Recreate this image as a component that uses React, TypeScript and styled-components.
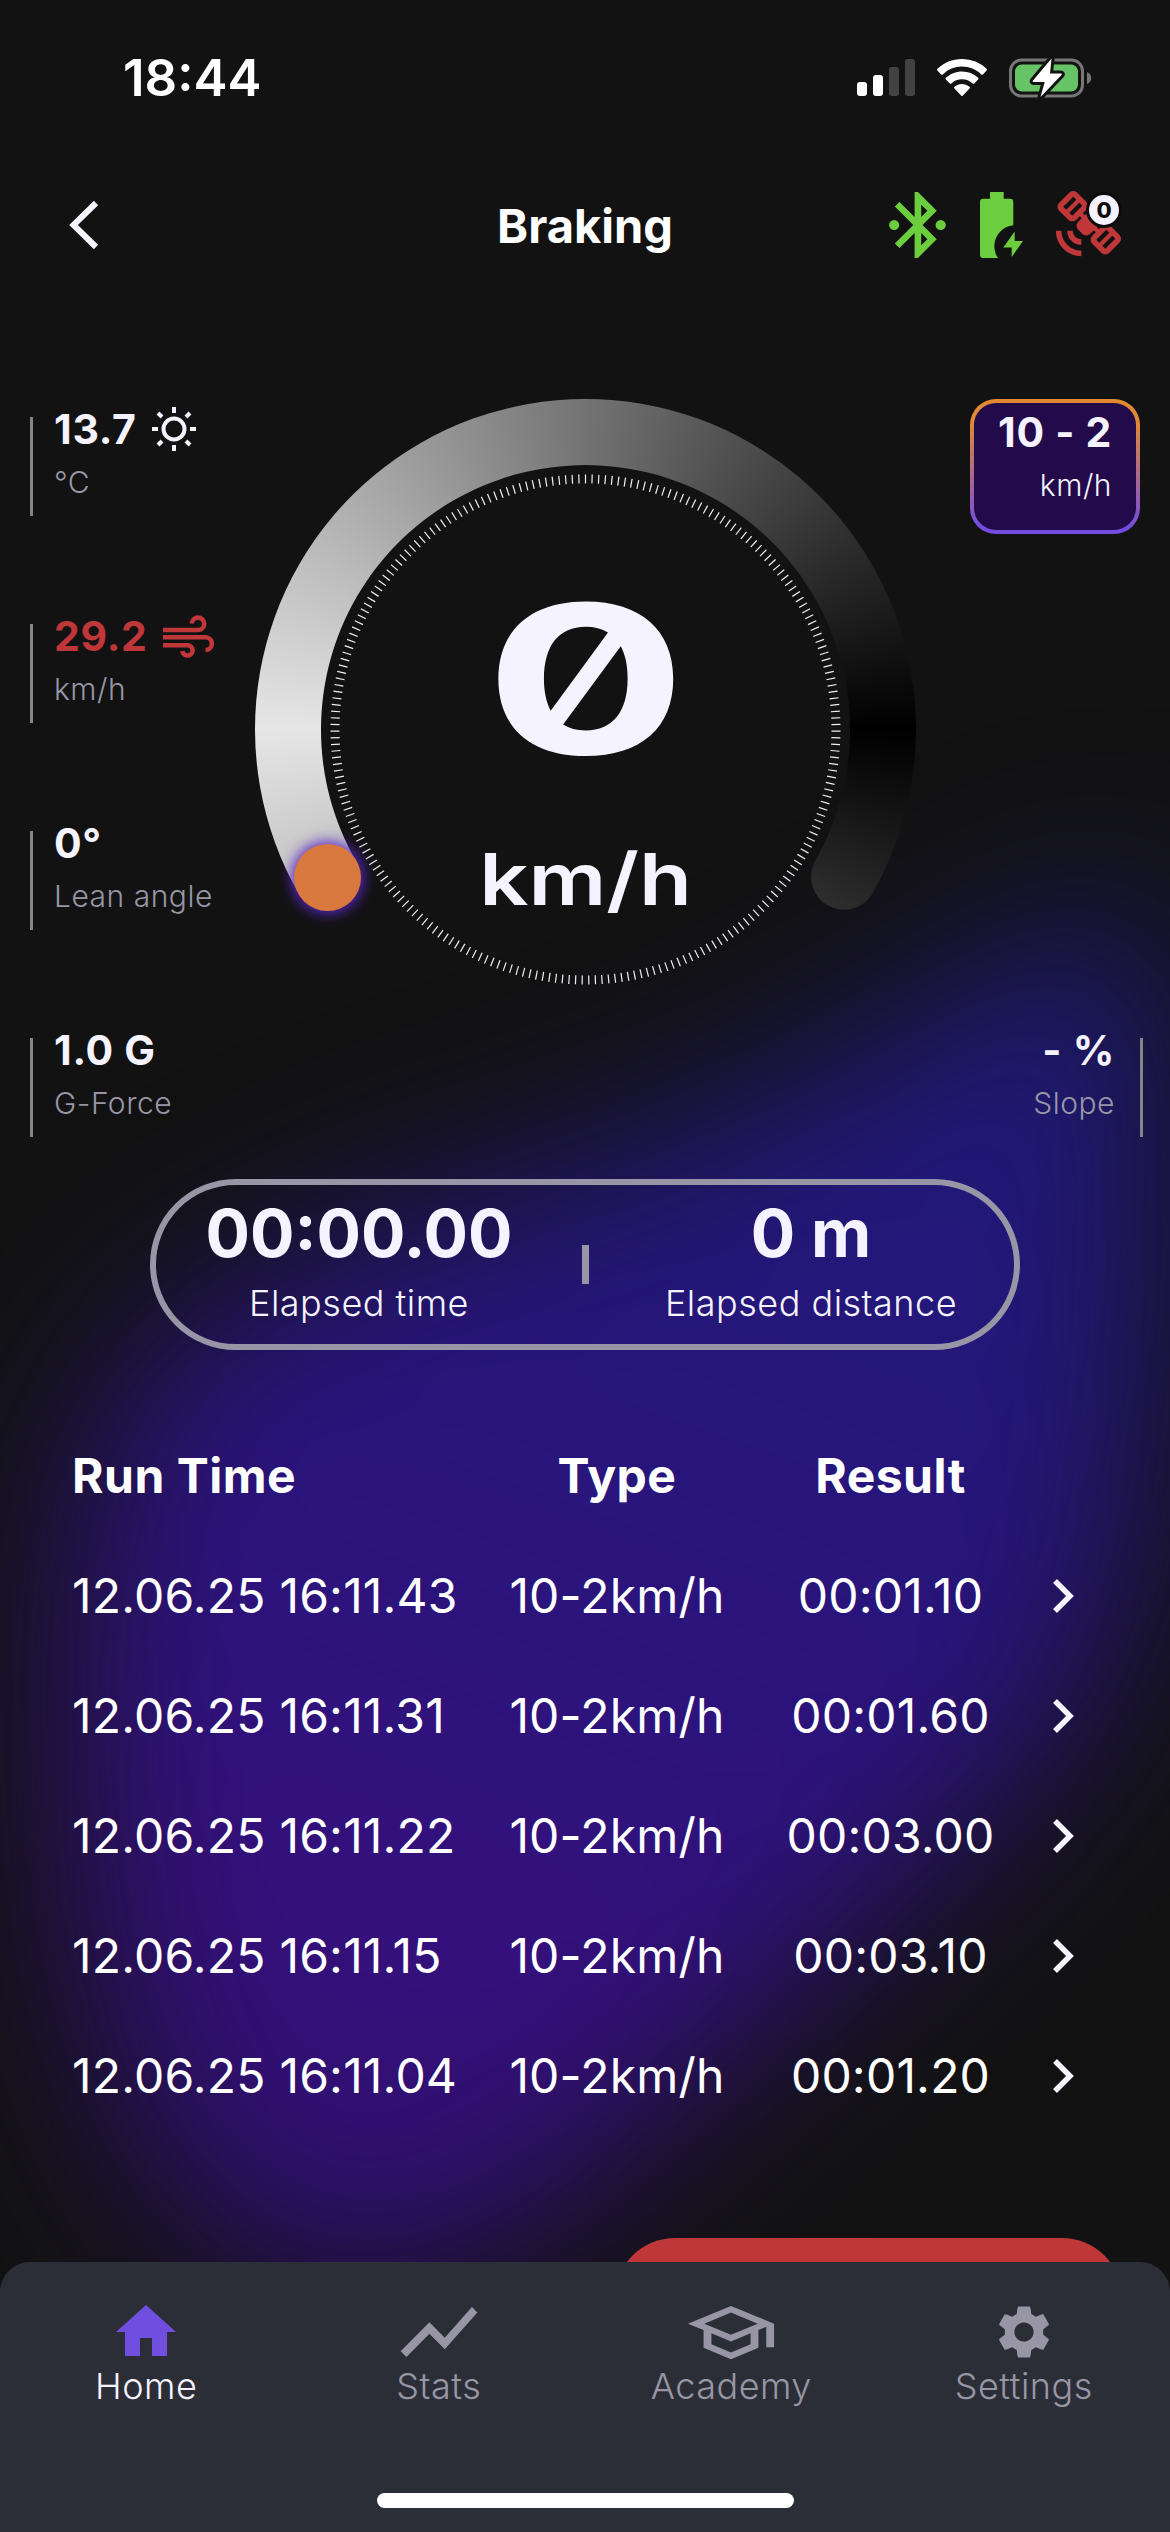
import React from "react";
import styled, { createGlobalStyle } from "styled-components";
import {
  MdHome,
  MdOutlineSchool,
  MdSatelliteAlt,
  MdSettings,
  MdShowChart,
} from "react-icons/md";

const color = {
  base: "#121212",
  text: "#f5f3ff",
  muted: "#9896a6",
  rule: "#858585",
  red: "#bf3739",
  green: "#6cce3e",
  violet: "#704fe0",
  nav: "#2c2e37",
};

const GlobalStyle = createGlobalStyle`
  * { box-sizing: border-box; }
  body {
    margin: 0;
    background: ${color.base};
    font-family: Inter, "Liberation Sans", sans-serif;
    color: ${color.text};
  }
`;

const Screen = styled.div`
  position: relative;
  isolation: isolate;
  display: flex;
  flex-direction: column;
  width: 1170px;
  height: 2532px;
  overflow: hidden;
  background: ${color.base};
`;

const Glow = styled.svg`
  position: absolute;
  inset: 0;
  z-index: -1;
`;

/* ---------- status bar ---------- */

const StatusBar = styled.div`
  display: flex;
  justify-content: space-between;
  align-items: center;
  height: 156px;
  flex: none;
  padding: 0 78px 0 123px;
  color: #fff;
`;

const Clock = styled.span`
  font-size: 51px;
  font-weight: 600;
  line-height: 60px;
`;

const StatusIcons = styled.div`
  display: flex;
  align-items: center;
  gap: 22px;
`;

/* ---------- header ---------- */

const Header = styled.header`
  display: grid;
  grid-template-columns: minmax(0, 1fr) auto minmax(0, 1fr);
  align-items: center;
  height: 138px;
  flex: none;
  padding: 0 49px 0 66px;
`;

const Title = styled.h1`
  margin: 0;
  padding: 1px 17px 0 0;
  font-size: 47px;
  font-weight: 700;
  line-height: 60px;
  color: #fff;
`;

const HeaderIcons = styled.div`
  display: flex;
  justify-content: flex-end;
  align-items: center;
  gap: 34px;
`;

const Satellite = styled.div`
  position: relative;
  display: flex;
  margin-left: -4px;
  color: ${color.red};
  & > svg {
    transform: scaleX(-1);
  }
`;

const SatelliteCount = styled.span`
  position: absolute;
  top: 1px;
  right: -1px;
  width: 36px;
  height: 36px;
  border: 3px solid #0c0c0c;
  border-radius: 50%;
  background: ${color.text};
  color: #0c0c0c;
  font-size: 22px;
  font-weight: 800;
  line-height: 30px;
  text-align: center;
`;

/* ---------- dashboard ---------- */

const Dashboard = styled.section`
  display: grid;
  grid-template-columns: 255px 661px 254px;
  grid-template-rows: 738px;
  height: 738px;
  flex: none;
  margin-top: 105px;
`;

const SideColumn = styled.div<{ $end?: boolean }>`
  display: flex;
  flex-direction: column;
  justify-content: ${(p) => (p.$end ? "space-between" : "flex-start")};
  align-items: ${(p) => (p.$end ? "flex-end" : "flex-start")};
  padding: ${(p) => (p.$end ? "0 27px 0 0" : "5px 0 0 30px")};
`;

const MetricBox = styled.div<{ $end?: boolean }>`
  display: flex;
  flex-direction: ${(p) => (p.$end ? "row-reverse" : "row")};
  align-items: flex-start;
  gap: ${(p) => (p.$end ? "25px" : "21px")};
  height: ${(p) => (p.$end ? "112px" : "207px")};
  flex: none;
  text-align: ${(p) => (p.$end ? "right" : "left")};
`;

const MetricRule = styled.div`
  width: 3px;
  height: 99px;
  margin-top: 13px;
  background: ${color.rule};
`;

const MetricValue = styled.div<{ $alert?: boolean; $end?: boolean }>`
  display: flex;
  align-items: center;
  justify-content: ${(p) => (p.$end ? "flex-end" : "flex-start")};
  gap: 15px;
  height: 50px;
  font-size: 41px;
  font-weight: 700;
  line-height: 50px;
  letter-spacing: 0.7px;
  white-space: pre;
  color: ${(p) => (p.$alert ? color.red : color.text)};
`;

const MetricLabel = styled.div<{ $bright?: boolean }>`
  font-size: 30px;
  font-weight: 350;
  line-height: 56px;
  letter-spacing: 0.5px;
  white-space: nowrap;
  color: ${(p) => (p.$bright ? color.text : color.muted)};
`;

const RangeCard = styled.button`
  display: flex;
  flex-direction: column;
  align-items: flex-end;
  width: 170px;
  height: 135px;
  margin-right: 3px;
  padding: 4px 24px 0 0;
  border: 4px solid transparent;
  border-radius: 26px;
  background:
    linear-gradient(#230b4b, #230b4b) padding-box,
    linear-gradient(#e28a31, #e28a31 15%, #764ce0 95%) border-box;
  font-family: inherit;
`;

const Gauge = styled.div`
  display: grid;
  width: 661px;
  height: 661px;
  & > * {
    grid-area: 1 / 1;
  }
`;

/* Sweep from 150deg to 30deg: centre 330.5, outer radius 330.5, inner radius 264.5. */
const GaugeTrack = styled.div`
  background: conic-gradient(from 90deg, #000, #e6e6e6 50%, #000);
  clip-path: path(
    "M44.3 495.7 A330.5 330.5 0 1 1 616.7 495.7 A33 33 0 0 1 559.6 462.8 A264.5 264.5 0 1 0 101.4 462.8 Z"
  );
`;

const GaugeMarks = styled.svg`
  z-index: 1;
  overflow: visible;
`;

const Readout = styled.div`
  z-index: 1;
  display: flex;
  flex-direction: column;
  align-items: center;
  padding-top: 170px;
`;

const Speed = styled.div`
  height: 220px;
  font-size: 207px;
  font-weight: 700;
  line-height: 220px;
  font-feature-settings: "zero";
  transform: scaleX(1.45);
`;

const SpeedUnit = styled.div`
  margin-top: 50px;
  font-size: 72px;
  font-weight: 600;
  line-height: 80px;
  transform: scaleX(1.2);
`;

/* ---------- elapsed pill ---------- */

const Elapsed = styled.section`
  display: grid;
  grid-template-columns: 406px 7px 406px;
  justify-content: space-between;
  align-items: center;
  width: 870px;
  height: 171px;
  flex: none;
  margin: 42px auto 0;
  border: 6px solid ${color.muted};
  border-radius: 86px;
  text-align: center;
`;

const ElapsedValue = styled.div`
  padding-top: 3px;
  font-size: 66px;
  font-weight: 700;
  line-height: 74px;
`;

const ElapsedLabel = styled.div`
  font-size: 36px;
  font-weight: 350;
  line-height: 67px;
  letter-spacing: 0.5px;
  white-space: nowrap;
`;

const ElapsedDivider = styled.div`
  height: 39px;
  background: ${color.muted};
`;

/* ---------- run table ---------- */

const Runs = styled.section`
  display: flex;
  flex-direction: column;
  flex: none;
  margin-top: 66px;
  padding: 0 72px;
`;

const RunRow = styled.div<{ $head?: boolean }>`
  display: grid;
  grid-template-columns: 410px 270px 277px 1fr;
  align-items: center;
  height: 120px;
  font-size: 48px;
  font-weight: ${(p) => (p.$head ? 700 : 400)};
  letter-spacing: ${(p) => (p.$head ? "0.5px" : "0.2px")};
  line-height: 60px;
  white-space: nowrap;
  color: #fff;
  & > span + span {
    text-align: center;
  }
  & > svg {
    margin-left: 23px;
  }
`;

const StopButton = styled.button`
  width: 507px;
  height: 120px;
  flex: none;
  margin: 102px 48px 0 auto;
  border: 0;
  border-radius: 60px;
  background: ${color.red};
`;

/* ---------- bottom navigation ---------- */

const BottomBar = styled.footer`
  position: absolute;
  left: 0;
  right: 0;
  bottom: 0;
  display: flex;
  flex-direction: column;
  align-items: center;
  justify-content: space-between;
  height: 270px;
  padding-bottom: 24px;
  border-radius: 30px 30px 0 0;
  background: ${color.nav};
`;

const Tabs = styled.nav`
  display: grid;
  grid-template-columns: repeat(4, 1fr);
  width: 100%;
  padding-top: 34px;
`;

const Tab = styled.div<{ $active?: boolean }>`
  display: flex;
  flex-direction: column;
  align-items: center;
  font-size: 36px;
  font-weight: 350;
  line-height: 44px;
  letter-spacing: 0.5px;
  color: ${(p) => (p.$active ? color.text : color.muted)};
`;

const TabIcon = styled.span<{ $active?: boolean }>`
  display: flex;
  align-items: center;
  justify-content: center;
  height: 72px;
  margin-bottom: -4px;
  color: ${(p) => (p.$active ? color.violet : color.muted)};
`;

const HomeIndicator = styled.div`
  width: 417px;
  height: 15px;
  border-radius: 8px;
  background: #fff;
`;

/* ---------- icons ---------- */

const SignalIcon = () => (
  <svg width="58" height="38" viewBox="0 0 58 38">
    <rect x="0" y="23" width="10" height="14" rx="3" fill="#fff" />
    <rect x="16" y="16" width="10" height="21" rx="3" fill="#fff" />
    <rect x="32" y="8" width="10" height="29" rx="3" fill="#424242" />
    <rect x="48" y="0" width="10" height="37" rx="3" fill="#424242" />
  </svg>
);

const WifiIcon = () => (
  <svg width="50" height="38" viewBox="0 0 50 38" fill="#fff">
    <path d="M25 0C15.500 0 6.800 3.700 .4 9.800a1.200 1.200 0 0 0 0 1.800l3.700 3.800a1.200 1.200 0 0 0 1.700 0A27.700 27.700 0 0 1 25 7.600c7.400 0 14.100 2.900 19.200 7.800a1.200 1.200 0 0 0 1.700 0l3.700-3.800a1.200 1.200 0 0 0 0-1.800A35.500 35.500 0 0 0 25 0z" />
    <path d="M25 12.500c-6.200 0-11.900 2.400-16.100 6.300a1.200 1.200 0 0 0 0 1.800l3.800 3.800a1.200 1.200 0 0 0 1.700 0A15.600 15.600 0 0 1 25 20.200c4.100 0 7.800 1.600 10.600 4.200a1.200 1.200 0 0 0 1.700 0l3.800-3.800a1.200 1.200 0 0 0 0-1.800A23.600 23.600 0 0 0 25 12.500z" />
    <path d="M25 25c-2.900 0-5.500 1.100-7.500 2.800a1.200 1.200 0 0 0 0 1.800l6.600 6.900a1.200 1.200 0 0 0 1.800 0l6.600-6.900a1.200 1.200 0 0 0 0-1.800A11.500 11.500 0 0 0 25 25z" />
  </svg>
);

const ChargingIcon = () => (
  <svg width="83" height="42" viewBox="0 0 83 42">
    <rect x="1.500" y="3" width="72" height="36" rx="11" fill="none" stroke="#767676" strokeWidth="3" />
    <path d="M78 15v12c2.500-1 4.200-3.200 4.200-6s-1.700-5-4.200-6z" fill="#767676" />
    <rect x="6" y="7.500" width="63" height="27" rx="7" fill="#66c466" />
    <path
      d="M42.500 1.500 24 23.500c-.6.800-.2 1.500.7 1.500h11L31.500 40 52.500 18c.6-.8.200-1.500-.7-1.500H41z"
      fill="#fff"
      stroke={color.base}
      strokeWidth="6"
      strokeLinejoin="round"
      paintOrder="stroke"
    />
  </svg>
);

const BackIcon = () => (
  <svg width="34" height="50" viewBox="0 0 34 50" fill="none" stroke={color.text} strokeWidth="6">
    <path d="M30 3 7.500 25 30 47" />
  </svg>
);

const BluetoothIcon = () => (
  <svg width="57" height="66" viewBox="3.250 2 17.250 20" fill={color.green}>
    <path d="M17.710 7.710 12 2h-1v7.590L6.410 5 5 6.410 10.590 12 5 17.590 6.410 19 11 14.410V22h1l5.710-5.710L13.410 12l4.300-4.290zM13 5.830l1.880 1.880L13 9.590V5.830zm1.880 10.460L13 18.170v-3.760l1.880 1.880z" />
    <circle cx="4.800" cy="12" r="1.550" />
    <circle cx="18.900" cy="12" r="1.550" />
  </svg>
);

const DeviceBatteryIcon = () => (
  <svg width="43" height="66" viewBox="0 0 43 66" fill={color.green}>
    <path d="M33.300 33.300V10a3.300 3.300 0 0 0-3.300-3.300h-6.300V0H10v6.700H3.300A3.300 3.300 0 0 0 0 10v52.700A3.300 3.300 0 0 0 3.300 66H18a21 21 0 0 1 15.300-32.700z" />
    <path d="M34.700 39.500 23.300 55.500h8.400V65L43 49h-8.300z" />
  </svg>
);

const SunIcon = () => (
  <svg width="44" height="44" viewBox="0 0 44 44" fill="none" stroke={color.text} strokeWidth="4">
    <circle cx="22" cy="22" r="10.500" />
    <path d="M22 0v6M22 38v6M0 22h6M38 22h6M6 6l4 4M34 34l4 4M38 6l-4 4M10 34l-4 4" />
  </svg>
);

const WindIcon = () => (
  <svg width="51" height="43" viewBox="0 0 51 43" fill="none" stroke={color.red} strokeWidth="4.600">
    <path d="M0 15h35.500a6.200 6.200 0 1 0-6.700-6.500" />
    <path d="M0 22.300h42.500a6.300 6.300 0 0 1 0 12.700" />
    <path d="M0 30.200h25a5.200 5.200 0 1 1-5.700 6" />
  </svg>
);

const RowChevron = () => (
  <svg width="24" height="36" viewBox="0 0 24 36" fill="none" stroke={color.text} strokeWidth="5.500">
    <path d="M3 3 18 18 3 33" />
  </svg>
);

/* ---------- data ---------- */

const runs = [
  ["12.06.25 16:11.43", "00:01.10"],
  ["12.06.25 16:11.31", "00:01.60"],
  ["12.06.25 16:11.22", "00:03.00"],
  ["12.06.25 16:11.15", "00:03.10"],
  ["12.06.25 16:11.04", "00:01.20"],
];

const TICKS = 239;
const ticks = Array.from({ length: TICKS }, (_, i) => (i * 360) / TICKS);

type MetricProps = {
  value: string;
  label: string;
  icon?: React.ReactNode;
  alert?: boolean;
  end?: boolean;
};

const Metric = ({ value, label, icon, alert, end }: MetricProps) => (
  <MetricBox $end={end}>
    <MetricRule />
    <div>
      <MetricValue $alert={alert} $end={end}>
        {value}
        {icon}
      </MetricValue>
      <MetricLabel>{label}</MetricLabel>
    </div>
  </MetricBox>
);

export default function App() {
  return (
    <Screen>
      <GlobalStyle />
      <Glow width="1170" height="2532" viewBox="0 0 1170 2532">
        <defs>
          <linearGradient id="glow" gradientUnits="userSpaceOnUse" x1="900" y1="950" x2="450" y2="2250">
            <stop offset="0" stopColor="#1f1a78" />
            <stop offset="0.5" stopColor="#2a147c" />
            <stop offset="0.8" stopColor="#35107c" />
            <stop offset="1" stopColor="#2f1070" />
          </linearGradient>
          <filter id="soft" x="-30%" y="-30%" width="160%" height="160%" colorInterpolationFilters="sRGB">
            <feGaussianBlur stdDeviation="90" />
          </filter>
        </defs>
        <path
          d="M1150 890 C1010 950 800 1100 580 1165 C330 1235 120 1310 85 1480 C55 1700 60 2060 180 2200 C280 2320 440 2320 560 2200 C700 2070 960 1870 1080 1710 C1170 1580 1180 1100 1150 890Z"
          fill="url(#glow)"
          filter="url(#soft)"
        />
      </Glow>

      <StatusBar>
        <Clock>18:44</Clock>
        <StatusIcons>
          <SignalIcon />
          <WifiIcon />
          <ChargingIcon />
        </StatusIcons>
      </StatusBar>

      <Header>
        <BackIcon />
        <Title>Braking</Title>
        <HeaderIcons>
          <BluetoothIcon />
          <DeviceBatteryIcon />
          <Satellite>
            <MdSatelliteAlt size={68} />
            <SatelliteCount>0</SatelliteCount>
          </Satellite>
        </HeaderIcons>
      </Header>

      <Dashboard>
        <SideColumn>
          <Metric value="13.7" label="°C" icon={<SunIcon />} />
          <Metric value="29.2" label="km/h" icon={<WindIcon />} alert />
          <Metric value="0°" label="Lean angle" />
          <Metric value="1.0 G" label="G-Force" />
        </SideColumn>

        <Gauge>
          <GaugeTrack />
          <GaugeMarks width="661" height="661" viewBox="0 0 661 661">
            <defs>
              <filter id="thumbGlow" x="-50%" y="-50%" width="200%" height="200%">
                <feGaussianBlur stdDeviation="7" />
              </filter>
            </defs>
            <g stroke="#f2f2f2" strokeWidth="1.200">
              {ticks.map((a) => (
                <line key={a} x1="330.500" y1="75.500" x2="330.500" y2="84.500" transform={`rotate(${a} 330.500 330.500)`} />
              ))}
            </g>
            <circle cx="72.500" cy="478.500" r="36" fill="#5a26c8" filter="url(#thumbGlow)" />
            <circle cx="72.500" cy="478.500" r="33.500" fill="#da793d" />
          </GaugeMarks>
          <Readout>
            <Speed>0</Speed>
            <SpeedUnit>km/h</SpeedUnit>
          </Readout>
        </Gauge>

        <SideColumn $end>
          <RangeCard>
            <MetricValue>10 - 2</MetricValue>
            <MetricLabel $bright>km/h</MetricLabel>
          </RangeCard>
          <Metric value="- %" label="Slope" end />
        </SideColumn>
      </Dashboard>

      <Elapsed>
        <div>
          <ElapsedValue>00:00.00</ElapsedValue>
          <ElapsedLabel>Elapsed time</ElapsedLabel>
        </div>
        <ElapsedDivider />
        <div>
          <ElapsedValue>0 m</ElapsedValue>
          <ElapsedLabel>Elapsed distance</ElapsedLabel>
        </div>
      </Elapsed>

      <Runs>
        <RunRow $head>
          <span>Run Time</span>
          <span>Type</span>
          <span>Result</span>
        </RunRow>
        {runs.map(([time, result]) => (
          <RunRow key={time}>
            <span>{time}</span>
            <span>10-2km/h</span>
            <span>{result}</span>
            <RowChevron />
          </RunRow>
        ))}
      </Runs>

      <StopButton aria-label="Stop" />

      <BottomBar>
        <Tabs>
          <Tab $active>
            <TabIcon $active>
              <MdHome size={72} />
            </TabIcon>
            Home
          </Tab>
          <Tab>
            <TabIcon>
              <MdShowChart size={92} />
            </TabIcon>
            Stats
          </Tab>
          <Tab>
            <TabIcon>
              <MdOutlineSchool style={{ width: 94, height: 71 }} preserveAspectRatio="none" />
            </TabIcon>
            Academy
          </Tab>
          <Tab>
            <TabIcon>
              <MdSettings size={64} />
            </TabIcon>
            Settings
          </Tab>
        </Tabs>
        <HomeIndicator />
      </BottomBar>
    </Screen>
  );
}
